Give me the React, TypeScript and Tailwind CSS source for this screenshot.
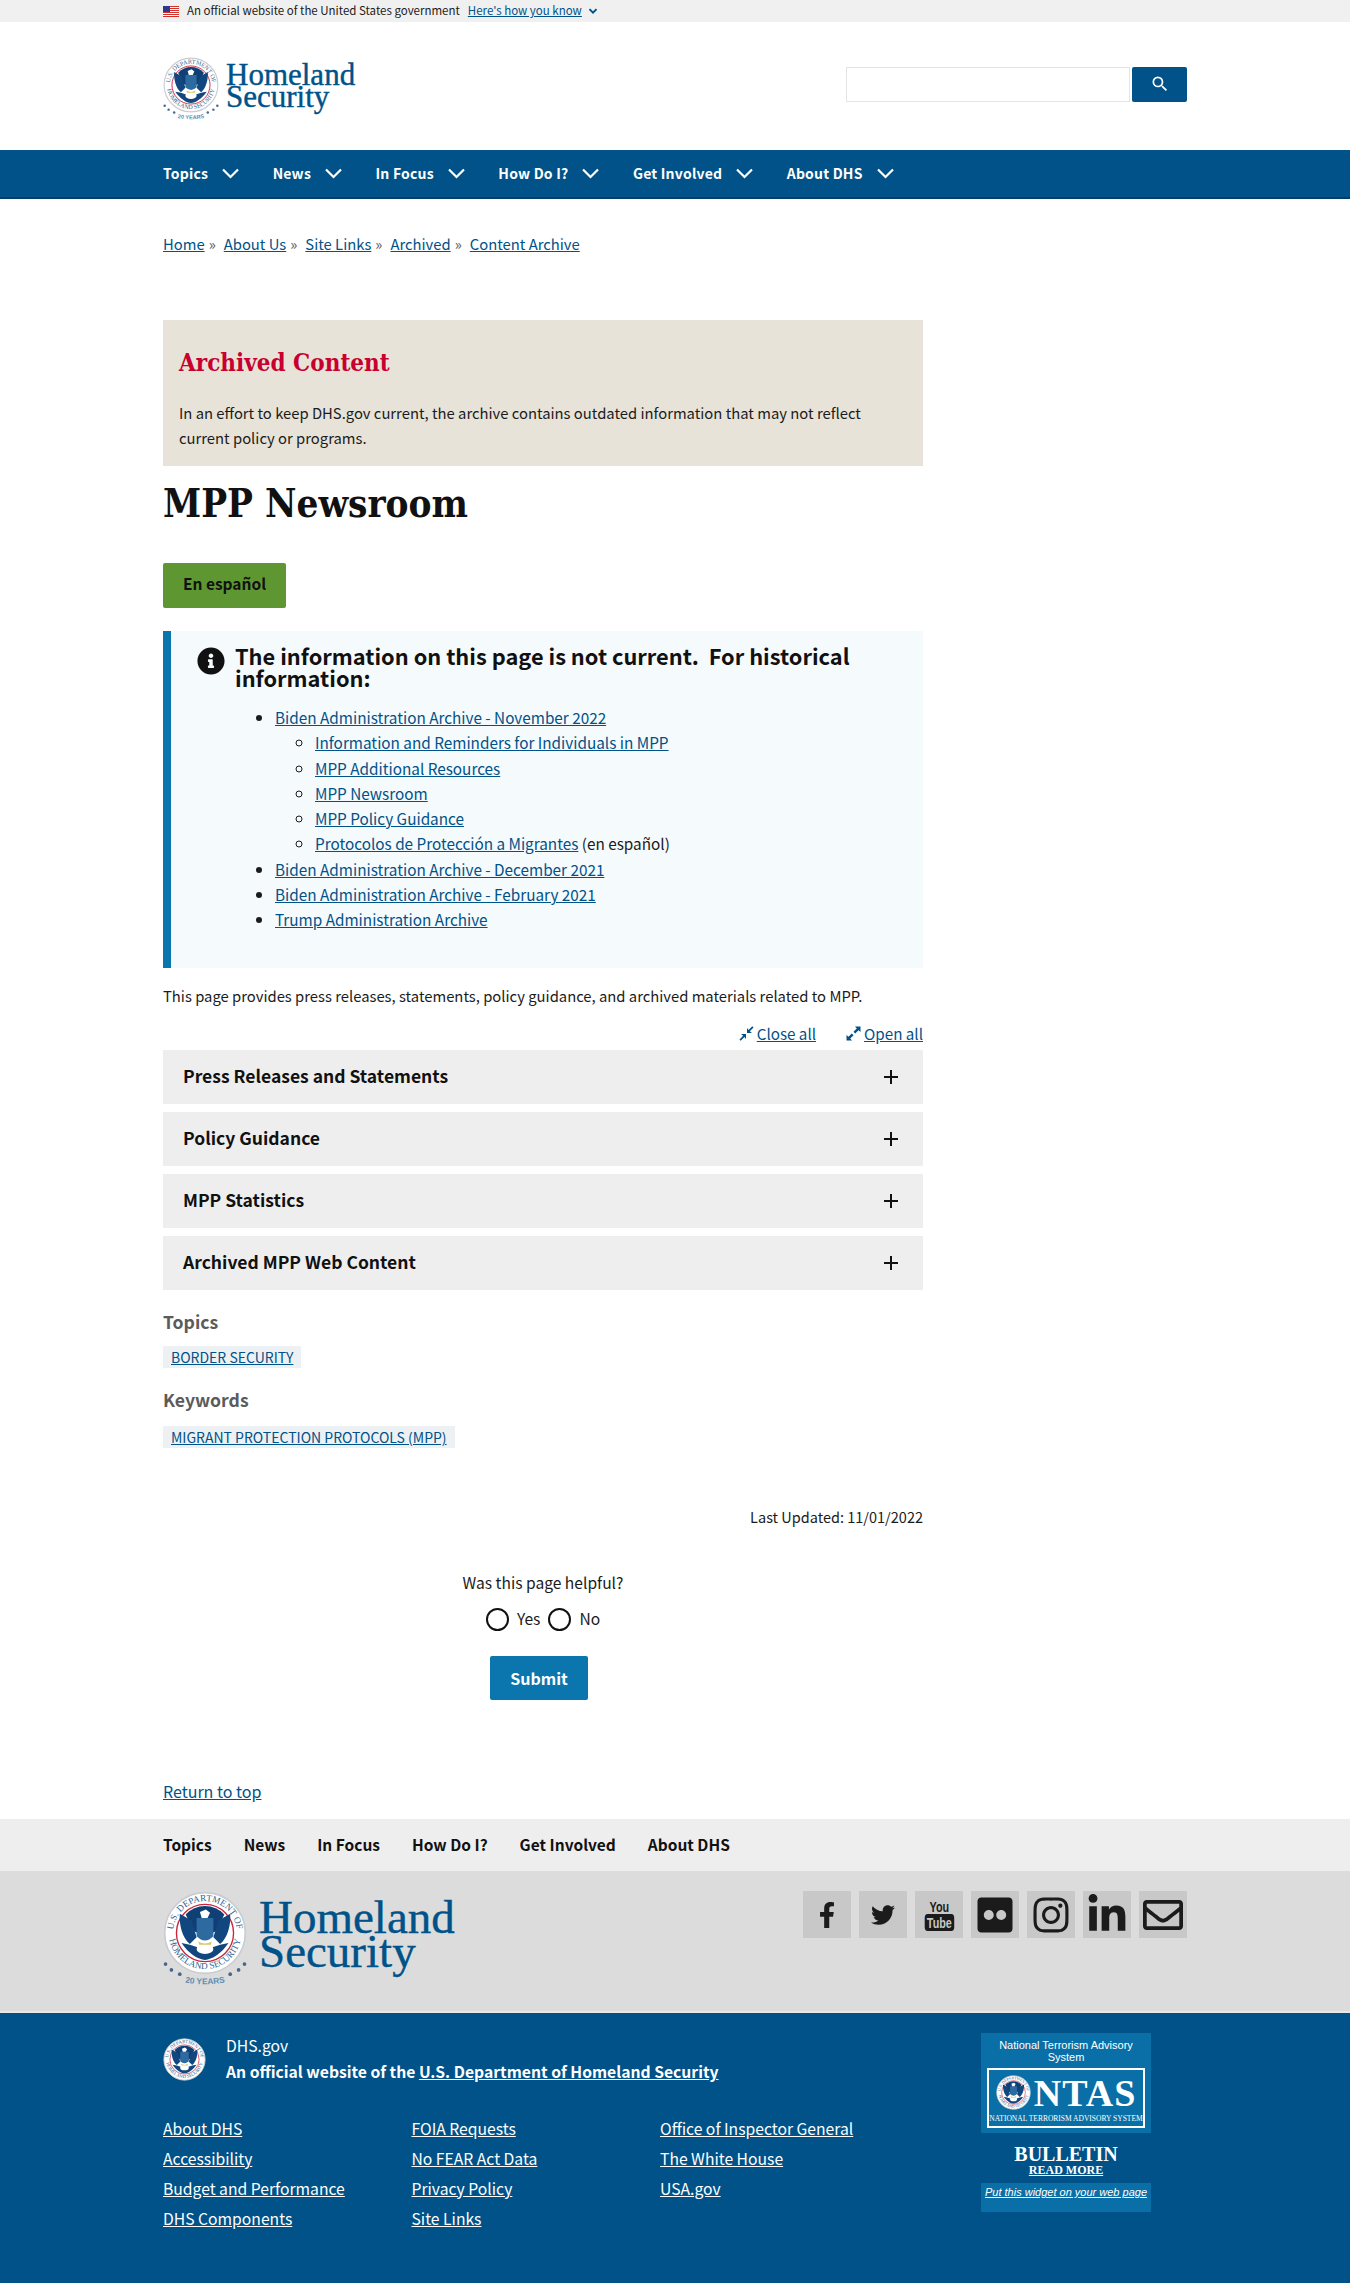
import React from 'react';
import { FaFacebookF, FaTwitter, FaFlickr, FaInstagram, FaLinkedinIn, FaRegEnvelope, FaInfoCircle } from 'react-icons/fa';
import { MdSearch } from 'react-icons/md';

const sans = "font-['Noto_Sans_CJK_SC','Noto_Sans',sans-serif]";
const serif = "font-['Liberation_Serif','DejaVu_Serif',serif]";
const slab = "font-['DejaVu_Serif',serif] font-bold [font-stretch:condensed]";

const navItems = ['Topics', 'News', 'In Focus', 'How Do I?', 'Get Involved', 'About DHS'];
const crumbs = ['Home', 'About Us', 'Site Links', 'Archived', 'Content Archive'];
const accordions = ['Press Releases and Statements', 'Policy Guidance', 'MPP Statistics', 'Archived MPP Web Content'];
const subLinks = [
  'Information and Reminders for Individuals in MPP',
  'MPP Additional Resources',
  'MPP Newsroom',
  'MPP Policy Guidance',
];
const footerCols = [
  ['About DHS', 'Accessibility', 'Budget and Performance', 'DHS Components'],
  ['FOIA Requests', 'No FEAR Act Data', 'Privacy Policy', 'Site Links'],
  ['Office of Inspector General', 'The White House', 'USA.gov'],
];

function Seal({ size, years, id }: { size: number; years?: boolean; id: string }) {
  return (
    <svg width={size} height={years ? size * 1.16 : size} viewBox={years ? '0 0 100 116' : '0 0 100 100'} className="shrink-0">
      <defs>
        <path id={`${id}-top`} d="M12 50a38 38 0 0 1 76 0" />
        <path id={`${id}-bot`} d="M7 50a43 43 0 0 0 86 0" />
        <path id={`${id}-yrs`} d="M22 108q28 6 56 0" />
      </defs>
      <circle cx="50" cy="50" r="48" fill="#fff" stroke="#c9ccd2" strokeWidth="2" />
      <text fontFamily="Liberation Serif, serif" fontSize="11" fill="#2f5f8c">
        <textPath href={`#${id}-top`} startOffset="50%" textAnchor="middle">U.S. DEPARTMENT OF</textPath>
        <textPath href={`#${id}-bot`} startOffset="50%" textAnchor="middle">HOMELAND SECURITY</textPath>
      </text>
      <circle cx="50" cy="50" r="34" fill="#fff" stroke="#c8243c" strokeWidth="1.6" />
      <path d="M50 18a32 32 0 0 1 23 10L63 48l-13 6-13-6-10-20a32 32 0 0 1 23-10Z" fill="#0f3f74" />
      <path d="M20 27l14 8 6 20-8 8C23 56 19 40 20 27Zm60 0-14 8-6 20 8 8c9-7 13-23 12-36Z" fill="#12467f" />
      <path d="M40 32h20v22q-10 10-20 0Z" fill="#2d6a9f" />
      <path d="M44 25l7-3 5 4-3 6h-7Z" fill="#fff" />
      <path d="M22 62c8 12 20 20 28 20s20-8 28-20l-10 2-18 6-18-6Z" fill="#12467f" />
      <ellipse cx="50" cy="69" rx="10" ry="6" fill="#fff" />
      <path d="M42 60q8 5 16 0l-1 4H43Z" fill="#d9c76a" />
      {years && (
        <>
          <text fontFamily="Liberation Sans, sans-serif" fontSize="10" fontWeight="700" fill="#5f8fb4">
            <textPath href={`#${id}-yrs`} startOffset="50%" textAnchor="middle">20 YEARS</textPath>
          </text>
          {[[3, 87], [10, 94], [20, 99], [80, 99], [90, 94], [97, 87]].map(([x, y]) => (
            <circle key={x} cx={x} cy={y} r="2.2" fill="#46678a" />
          ))}
        </>
      )}
    </svg>
  );
}

function Logo({ seal, text, id, gap, lift, className }: { seal: number; text: string; id: string; gap: string; lift: string; className?: string }) {
  return (
    <div className={`flex items-center ${gap} ${className ?? ''}`}>
      <Seal size={seal} years id={id} />
      <div className={`${serif} ${text} ${lift} text-[#005288] [-webkit-text-stroke:0.4px_#005288]`}>
        Homeland<br />Security
      </div>
    </div>
  );
}

function Chevron({ className, stroke = 2.2 }: { className?: string; stroke?: number }) {
  return (
    <svg width="17" height="11" viewBox="0 0 17 11" fill="none" stroke="currentColor" strokeWidth={stroke} className={className}>
      <path d="M1 1.5l7.5 7.5L16 1.5" />
    </svg>
  );
}

function Flag() {
  return (
    <svg width="16" height="11" viewBox="0 0 16 11">
      <rect width="16" height="11" fill="#fff" />
      {[0, 2, 4, 6, 8, 10].map((y) => (
        <rect key={y} y={y} width="16" height="1" fill="#d0312d" />
      ))}
      <rect width="7" height="6" fill="#2b3a8c" />
    </svg>
  );
}

function CloseIcon() {
  return (
    <svg width="15" height="15" viewBox="0 0 15 15" fill="#005288">
      <path d="M14.5 1.5 10.8 5.200 13 7H8V2l1.600 2L13.300.3Z" />
      <path d="M.5 13.500 4.200 9.800 2 8h5v5l-1.600-2-3.700 3.700Z" />
    </svg>
  );
}

function OpenIcon() {
  return (
    <svg width="15" height="15" viewBox="0 0 15 15" fill="#005288">
      <path d="M9 .5h5.500V6l-2-1.800L9.200 7.500 7.500 5.800l3.300-3.300Z" />
      <path d="M6 14.500H.5V9l2 1.800 3.300-3.300 1.700 1.700-3.300 3.300Z" />
    </svg>
  );
}

function YouTubeMark() {
  return (
    <div className="flex flex-col items-center font-['Liberation_Sans',sans-serif] font-bold text-[#1b1b1b] leading-none scale-x-[0.72]">
      <span className="text-[15px] leading-[15px]">You</span>
      <span className="text-[15px] leading-[17px] text-[#c8c8c8] bg-[#1b1b1b] rounded-[4px] px-[3px]">Tube</span>
    </div>
  );
}

function NtasWidget() {
  return (
    <div className="w-[170px] text-center text-white mr-[36px]">
      <div className="bg-[#0a6fa6] px-[6px] pt-[6px] pb-[5px] h-[100px] font-['Liberation_Sans',sans-serif]">
        <div className="text-[11px] leading-[12px] h-[29px]">National Terrorism Advisory System</div>
        <div className="border-2 border-white h-[60px] flex flex-col items-center justify-between pt-[5px] pb-[3px]">
          <div className="flex items-center gap-[3px]">
            <Seal size={35} id="ntas" />
            <span className={`${serif} text-[38px] leading-[34px] font-bold tracking-[1px]`}>NTAS</span>
          </div>
          <div className={`${serif} text-[7.500px] leading-[9px] whitespace-nowrap`}>NATIONAL TERRORISM ADVISORY SYSTEM</div>
        </div>
      </div>
      <div className={`${serif} font-bold text-[20px] leading-[18px] mt-[12px]`}>BULLETIN</div>
      <div className={`${serif} font-bold text-[12px] leading-[14px] underline`}>READ MORE</div>
      <div className="bg-[#0a6fa6] h-[29px] mt-[6px] pt-[2px] font-['Liberation_Sans',sans-serif] text-[11px] leading-[14px] italic underline whitespace-nowrap">
        Put this widget on your web page
      </div>
    </div>
  );
}

export default function App() {
  return (
    <div className={`${sans} text-[15px] text-[#1b1b1b] bg-white min-h-[2283px] flex flex-col`}>
      <div className="bg-[#f0f0f0] h-[22px]">
        <div className="w-[1024px] mx-auto flex items-center h-full text-[11.500px]">
          <Flag />
          <span className="ml-[8px]">An official website of the United States government</span>
          <a className="ml-[8px] text-[#005288] underline">Here's how you know</a>
          <Chevron stroke={4} className="ml-[7px] w-[8px] h-[6px] text-[#005288]" />
        </div>
      </div>

      <header className="h-[128px] w-[1024px] mx-auto flex items-center justify-between">
        <Logo seal={56} text="text-[31px] leading-[22px]" id="top" gap="gap-[7px]" lift="-mt-[6px]" className="mt-[7px]" />
        <div className="flex gap-[2px] -mt-[4px]">
          <div className="w-[284px] h-[35px] border border-[#e4e4e4]" />
          <div className="w-[55px] h-[35px] bg-[#005288] rounded-[2px] flex items-center justify-center text-white">
            <MdSearch size={20} />
          </div>
        </div>
      </header>

      <nav className="bg-[#005288] h-[49px] border-b-2 border-[#004068]">
        <div className="w-[1024px] mx-auto flex items-center h-full gap-[33.500px] text-white font-bold text-[14px] tracking-[0.2px]">
          {navItems.map((item) => (
            <div key={item} className="flex items-center gap-[14px]">
              <span>{item}</span>
              <Chevron />
            </div>
          ))}
        </div>
      </nav>

      <main className="w-[1024px] mx-auto">
        <div className="flex gap-[8px] pt-[33px] h-[121px] leading-[24px] text-[14.800px]">
          {crumbs.map((c, i) => (
            <span key={c} className="flex">
              <a className="text-[#005288] underline">{c}</a>
              {i < crumbs.length - 1 && <span className="ml-[4px] text-[#5b5b5b]">»</span>}
            </span>
          ))}
        </div>

        <div className="w-[760px]">
          <div className="bg-[#e8e3d8] h-[146px] pl-[16px] pr-[16px] pt-[26px]">
            <h2 className={`${slab} text-[#c8002f] text-[24px] leading-[34px]`}>Archived Content</h2>
            <p className="mt-[21px] leading-[24.500px] text-[14.800px]">
              In an effort to keep DHS.gov current, the archive contains outdated information that may not reflect current policy or programs.
            </p>
          </div>

          <h1 className={`${slab} text-[38.300px] leading-[50px] text-[#111] mt-[13px]`}>MPP Newsroom</h1>

          <a className="mt-[34px] flex items-center justify-center w-[123px] h-[45px] pb-[3px] bg-[#5e9732] rounded-[2px] font-bold text-[15.500px] text-[#111]">En español</a>

          <div className="mt-[23px] h-[337px] border-l-[8px] border-[#0a76ad] bg-[#f5fafd] pt-[16px] pl-[26px]">
            <div className="flex gap-[10px]">
              <FaInfoCircle size={28} className="text-[#111] shrink-0" />
              <h3 className="font-bold text-[21.800px] leading-[22px] -mt-[2px] text-[#111] whitespace-pre">
                {'The information on this page is not current.  For historical\ninformation:'}
              </h3>
            </div>
            <ul className="list-disc pl-[78px] mt-[16px] leading-[25.300px] text-[15.300px]">
              <li><a className="text-[#005288] underline">Biden Administration Archive - November 2022</a>
                <ul className="list-[circle] pl-[40px]">
                  {subLinks.map((s) => (
                    <li key={s}><a className="text-[#005288] underline">{s}</a></li>
                  ))}
                  <li><a className="text-[#005288] underline">Protocolos de Protección a Migrantes</a> (en español)</li>
                </ul>
              </li>
              <li><a className="text-[#005288] underline">Biden Administration Archive - December 2021</a></li>
              <li><a className="text-[#005288] underline">Biden Administration Archive - February 2021</a></li>
              <li><a className="text-[#005288] underline">Trump Administration Archive</a></li>
            </ul>
          </div>

          <p className="mt-[16px] leading-[24px] text-[14.800px]">This page provides press releases, statements, policy guidance, and archived materials related to MPP.</p>

          <div className="flex justify-end items-center gap-[30px] mt-[13px] h-[24px] leading-[24px] text-[15.200px]">
            <span className="flex items-center gap-[3px]"><CloseIcon /><a className="text-[#005288] underline">Close all</a></span>
            <span className="flex items-center gap-[3px]"><OpenIcon /><a className="text-[#005288] underline">Open all</a></span>
          </div>

          <div className="flex flex-col gap-[8px] mt-[5px]">
            {accordions.map((a) => (
              <div key={a} className="bg-[#eeeeee] h-[54px] flex items-center justify-between pl-[20px] pr-[25px]">
                <span className="font-bold text-[17.500px] text-[#111] pb-[2px]">{a}</span>
                <svg width="14" height="14" viewBox="0 0 14 14" stroke="#111" strokeWidth="2"><path d="M7 0v14M0 7h14" /></svg>
              </div>
            ))}
          </div>

          <div className="font-bold text-[17.600px] leading-[26px] text-[#5b5b5b] mt-[19px]">Topics</div>
          <div className="mt-[11px] h-[22px]">
            <a className="inline-block h-[22px] leading-[22px] bg-[#eef1f4] px-[8px] text-[14px] text-[#005288] underline">BORDER SECURITY</a>
          </div>
          <div className="font-bold text-[17.600px] leading-[26px] text-[#5b5b5b] mt-[19px]">Keywords</div>
          <div className="mt-[13px] h-[22px]">
            <a className="inline-block h-[22px] leading-[22px] bg-[#eef1f4] px-[8px] text-[14px] text-[#005288] underline">MIGRANT PROTECTION PROTOCOLS (MPP)</a>
          </div>

          <div className="text-right mt-[57px] leading-[24px] text-[14.500px]">Last Updated: 11/01/2022</div>

          <div className="text-center mt-[41px] leading-[24px] text-[15.600px]">Was this page helpful?</div>
          <div className="flex justify-center items-center mt-[13px] h-[24px] text-[15.600px]">
            <span className="w-[23px] h-[23px] rounded-full border-2 border-[#111]" />
            <span className="ml-[8px]">Yes</span>
            <span className="ml-[8px] w-[23px] h-[23px] rounded-full border-2 border-[#111]" />
            <span className="ml-[8px]">No</span>
          </div>
          <div className="pl-[327px] mt-[25px]">
            <a className="flex items-center justify-center w-[98px] h-[44px] bg-[#0a76ad] rounded-[2px] text-white font-bold text-[16px]">Submit</a>
          </div>

          <div className="mt-[79px] leading-[24px] text-[16px]"><a className="text-[#005288] underline">Return to top</a></div>
        </div>
      </main>

      <div className="bg-[#eeeeee] h-[52px] mt-[16px]">
        <div className="w-[1024px] mx-auto flex items-center h-full gap-[32px] font-bold text-[15.500px] text-[#111]">
          {navItems.map((n) => <span key={n}>{n}</span>)}
        </div>
      </div>

      <div className="bg-[#dcdcdc] h-[142px] border-b-2 border-[#e8e8e8]">
        <div className="w-[1024px] mx-auto flex justify-between pt-[20px]">
          <Logo seal={84} text="text-[47px] leading-[34px]" id="foot" gap="gap-[12px]" lift="-mt-[12px]" />
          <div className="flex gap-[8px] h-[47px]">
            {[FaFacebookF, FaTwitter, null, FaFlickr, FaInstagram, FaLinkedinIn, FaRegEnvelope].map((Icon, i) => (
              <div key={i} className="w-[48px] h-[47px] bg-[#c8c8c8] flex items-center justify-center text-[#1b1b1b]">
                {Icon ? <Icon size={i === 0 ? 26 : i === 1 ? 24 : i === 5 ? 42 : 40} /> : <YouTubeMark />}
              </div>
            ))}
          </div>
        </div>
      </div>

      <footer className="bg-[#005288] grow text-white">
        <div className="w-[1024px] mx-auto flex justify-between pt-[20px]">
          <div>
            <div className="flex items-center gap-[20px] text-[15.700px]">
              <Seal size={43} id="agency" />
              <div className="leading-[26px]">
                <div>DHS.gov</div>
                <div className="font-bold">An official website of the <a className="underline">U.S. Department of Homeland Security</a></div>
              </div>
            </div>
            <div className="flex mt-[29px] leading-[30px] text-[15.700px]">
              {footerCols.map((col, i) => (
                <div key={i} className="w-[248.500px] flex flex-col">
                  {col.map((l) => <a key={l} className="underline">{l}</a>)}
                </div>
              ))}
            </div>
          </div>
          <NtasWidget />
        </div>
      </footer>
    </div>
  );
}
